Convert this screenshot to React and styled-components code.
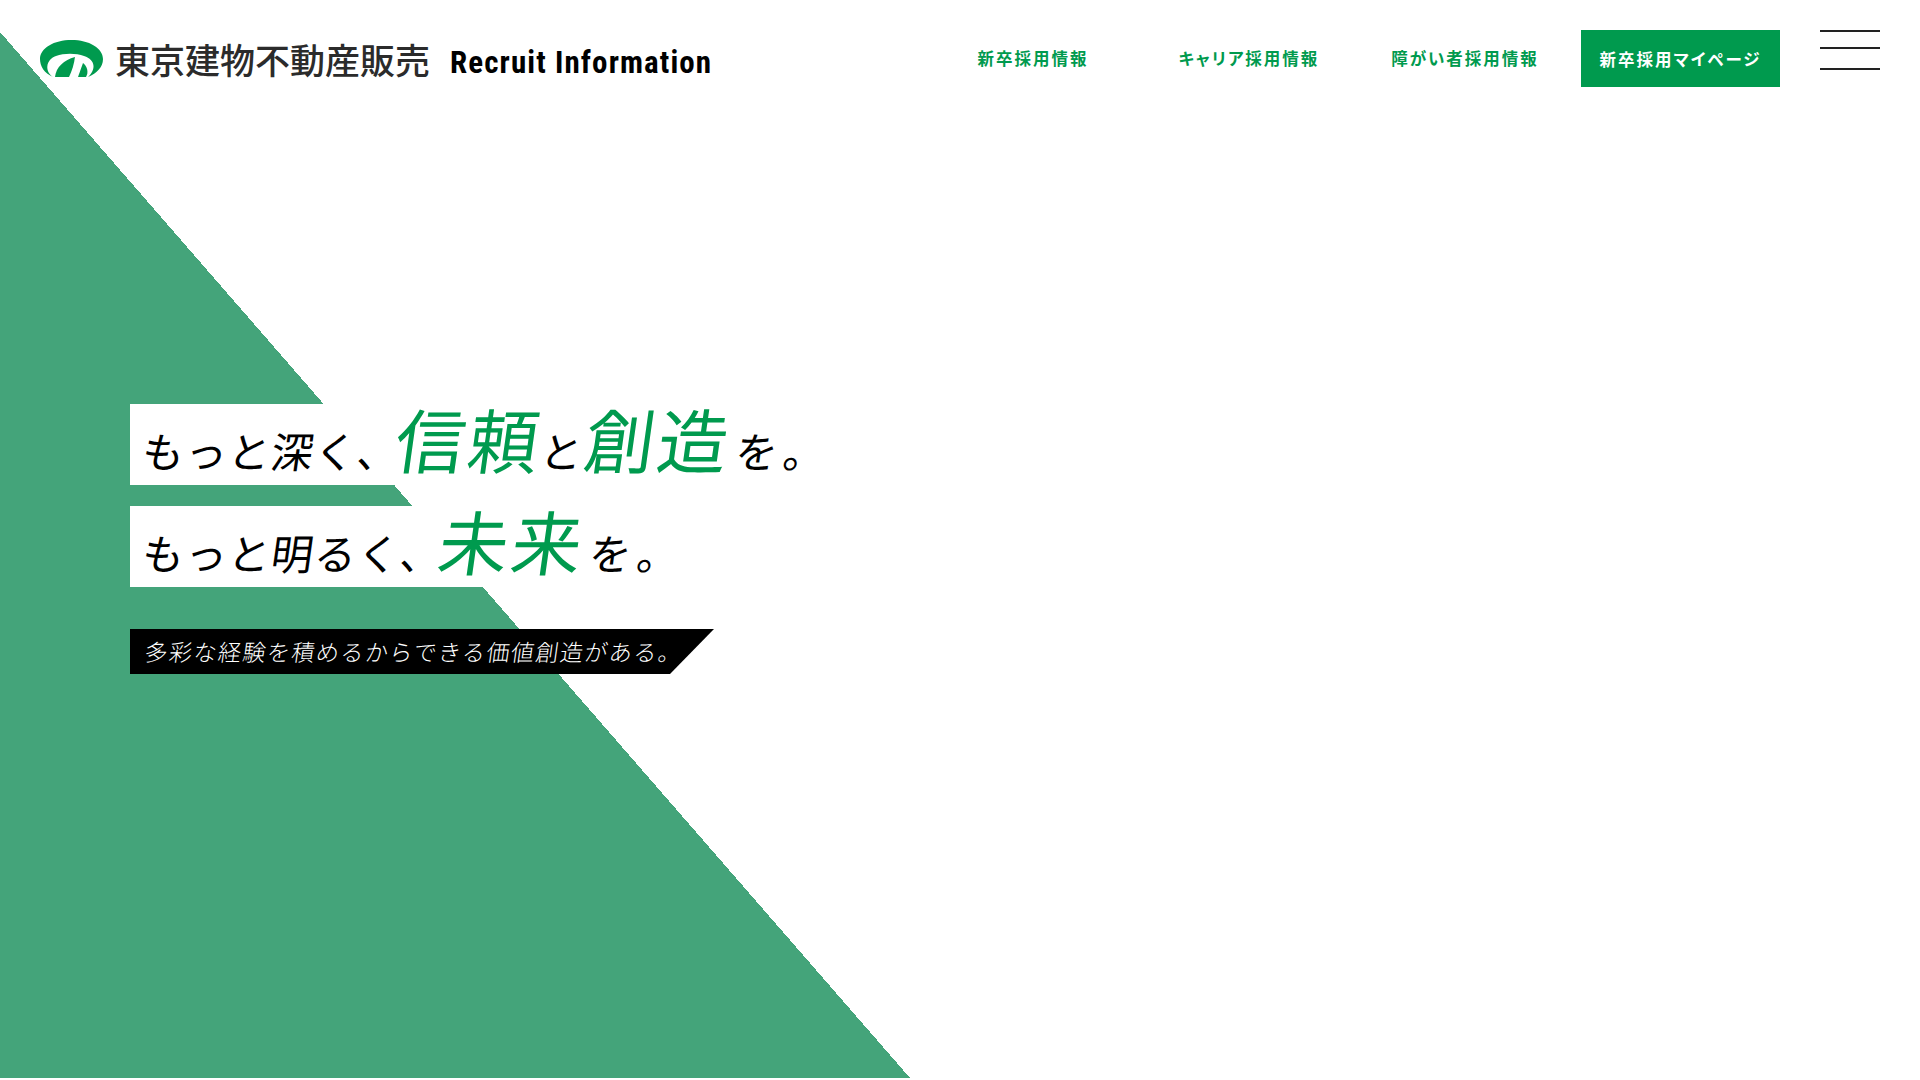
import React from "react";
import styled, { createGlobalStyle } from "styled-components";

const GlobalStyle = createGlobalStyle`
    html, body {
        margin: 0;
        padding: 0;
        background: #fff;
    }
    body {
        font-family: "Noto Sans CJK JP", "Noto Sans", sans-serif;
    }
`;

const Page = styled.div`
    width: 1920px;
    height: 1080px;
    overflow: hidden;
    background: linear-gradient(to top right, #44a47a 50%, transparent 50%) 0 32px / 910px 1046px no-repeat;
`;

const Header = styled.header`
    display: flex;
    justify-content: space-between;
    align-items: flex-start;
    padding: 30px 40px 0 40px;
`;

const Brand = styled.div`
    display: flex;
    align-items: flex-start;
    margin-top: 10px;
`;

const LogoMark = styled.svg`
    width: 63px;
    height: 38px;
    display: block;
`;

const CompanyName = styled.span`
    margin-left: 12px;
    font-size: 35px;
    line-height: 38px;
    font-weight: 500;
    color: #2b2b2b;
    white-space: nowrap;
`;

const SiteName = styled.span`
    margin: 4px 0 0 20px;
    font-family: Roboto, sans-serif;
    font-stretch: condensed;
    font-size: 31px;
    line-height: 38px;
    font-weight: 700;
    letter-spacing: 1.1px;
    color: #000;
    white-space: nowrap;
`;

const Nav = styled.nav`
    display: flex;
    align-items: flex-start;
`;

const NavLink = styled.a`
    width: 216px;
    text-align: center;
    font-size: 16.5px;
    font-weight: 700;
    font-feature-settings: "palt";
    letter-spacing: 2px;
    line-height: 56px;
    color: #009a4e;
    white-space: nowrap;
`;

const MyPageButton = styled.a`
    width: 199px;
    height: 57px;
    margin-left: 8px;
    display: flex;
    align-items: center;
    justify-content: center;
    background: #009a4e;
    color: #fff;
    font-size: 16.5px;
    font-weight: 700;
    font-feature-settings: "palt";
    letter-spacing: 2px;
    white-space: nowrap;
`;

const Burger = styled.button`
    width: 60px;
    height: 40px;
    margin-left: 40px;
    padding: 0;
    border: 0;
    background: none;
    display: block;
`;

const BurgerLine = styled.span`
    display: block;
    height: 2px;
    margin-bottom: ${(p) => p.$gap}px;
    background: #222;
`;

const Hero = styled.section`
    margin-top: 317px;
    margin-left: 130px;
    display: flex;
    flex-direction: column;
    align-items: flex-start;
`;

const CopyRow = styled.h1`
    width: 720px;
    height: 81px;
    margin: 0 0 ${(p) => p.$gap}px;
    padding-left: 14px;
    box-sizing: border-box;
    display: flex;
    align-items: flex-end;
    background: #fff;
    font-size: 42px;
    font-weight: 400;
    line-height: 70px;
    color: #000;
    white-space: nowrap;
`;

const Copy = styled.span`
    display: inline-block;
    letter-spacing: ${(p) => p.$spacing}px;
    transform: skewX(-8deg);
`;

const Accent = styled.em`
    font-style: normal;
    font-size: 70px;
    line-height: 78px;
    font-weight: 400;
    letter-spacing: 3px;
    margin-left: ${(p) => p.$shift || 0}px;
    color: #009a4e;
`;

const Tail = styled.span`
    margin-left: 6px;
    letter-spacing: 6px;
`;

const SubBanner = styled.p`
    width: 584px;
    height: 45px;
    margin: 0;
    padding: 0 0 2px 15px;
    box-sizing: border-box;
    display: flex;
    align-items: center;
    background: #000;
    clip-path: polygon(0 0, 100% 0, 540px 100%, 0 100%);
    color: #fff;
    font-size: 23px;
    font-weight: 300;
    white-space: nowrap;
`;

export default function App() {
    return (
        <Page>
            <GlobalStyle />
            <Header>
                <Brand>
                    <LogoMark viewBox="0 0 63 38">
                        <path
                            fill="#009a4e"
                            d="M13 37C4 33 0 26 0 19C0 8 14 0 31.5 0C49 0 63 8 63 19C63 27 57 33 48 37C56 30 56 20 44 16C36 13 24 13 16 16C5 20 5 32 13 37Z"
                        />
                        <path fill="#009a4e" d="M15 37C16 27 24 20 35 17C34 24 32 31 29 37Z" />
                        <path fill="#009a4e" d="M38 37L43 23C47 26 49 32 46 37Z" />
                    </LogoMark>
                    <CompanyName>東京建物不動産販売</CompanyName>
                    <SiteName>Recruit Information</SiteName>
                </Brand>
                <Nav>
                    <NavLink>新卒採用情報</NavLink>
                    <NavLink>キャリア採用情報</NavLink>
                    <NavLink>障がい者採用情報</NavLink>
                    <MyPageButton>新卒採用マイページ</MyPageButton>
                    <Burger aria-label="menu">
                        <BurgerLine $gap={15} />
                        <BurgerLine $gap={19} />
                        <BurgerLine $gap={0} />
                    </Burger>
                </Nav>
            </Header>
            <Hero>
                <CopyRow $gap={21}>
                    <Copy $spacing={1}>
                        もっと深く、<Accent $shift={-6}>信頼</Accent>と<Accent>創造</Accent>
                        <Tail>を。</Tail>
                    </Copy>
                </CopyRow>
                <CopyRow $gap={42}>
                    <Copy $spacing={1}>
                        もっと明るく、<Accent $shift={-6}>未来</Accent>
                        <Tail>を。</Tail>
                    </Copy>
                </CopyRow>
                <SubBanner>
                    <Copy $spacing={1.5}>多彩な経験を積めるからできる価値創造がある。</Copy>
                </SubBanner>
            </Hero>
        </Page>
    );
}
